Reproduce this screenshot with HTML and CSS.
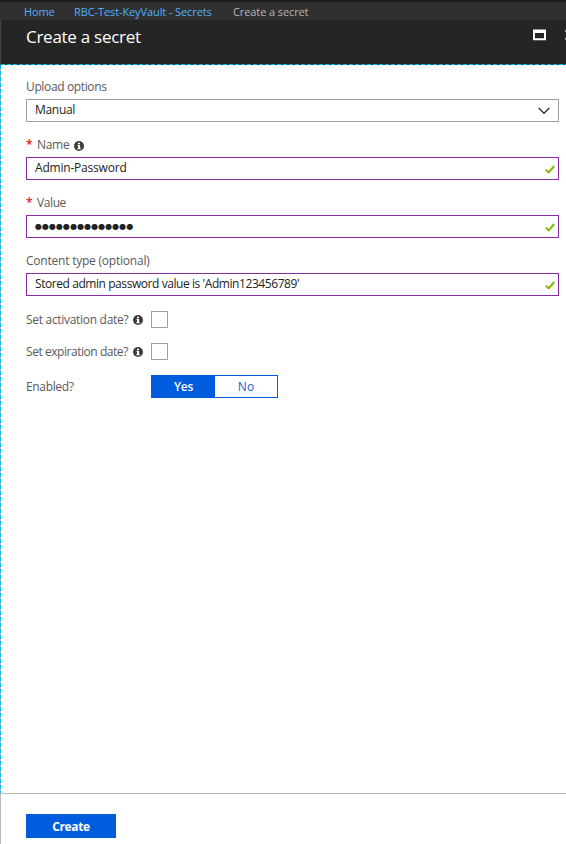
FILE: index.html
```html
<!DOCTYPE html>
<html lang="en">
<head>
<meta charset="utf-8">
<title>Create a secret</title>
<link rel="stylesheet" href="styles.css">
</head>
<body>
<svg class="defs" aria-hidden="true">
  <symbol id="info" viewBox="0 0 10 10"><circle cx="5" cy="5" r="5" fill="#3d3d3d"/><path d="M4 1.7h2v1.5H4zM3.5 4h2.6v3.3h.7v.9H3.3v-.9h.8V4.9h-.6z" fill="#fff"/></symbol>
  <symbol id="check" viewBox="0 0 10 9"><path d="M.8 4.6 3.7 7.4 9.2 1" fill="none" stroke="#7fba00" stroke-width="2"/></symbol>
</svg>
<nav class="crumbs">
  <a class="c1"><span>Home</span></a><a class="c2"><span>RBC-Test-KeyVault - Secrets</span></a><span class="here">Create a secret</span>
</nav>
<header class="head">
  <h1>Create a secret</h1>
  <div class="window">
    <svg width="13" height="12" viewBox="0 0 13 12"><path d="M0 .5h13v10.7H0zM2 4v5.3h9V4z" fill="#fff" fill-rule="evenodd"/></svg>
    <svg class="close" width="10" height="10" viewBox="0 0 10 10"><path d="M.5.5l9 9M9.500.5l-9 9" stroke="#fff" stroke-width="1.8"/></svg>
  </div>
</header>
<main class="form">
  <section class="field">
    <label class="t1">Upload options</label>
    <div class="box select"><span class="v1">Manual</span><svg width="12" height="8" viewBox="0 0 12 8"><path d="M.7 1 6 6.200 11.300 1" fill="none" stroke="#333" stroke-width="1.4"/></svg></div>
  </section>
  <section class="field">
    <label><b>*</b><span class="t2">Name</span><svg class="info"><use href="#info"/></svg></label>
    <div class="box"><span class="v2">Admin-Password</span><svg class="check"><use href="#check"/></svg></div>
  </section>
  <section class="field">
    <label><b>*</b><span class="t3">Value</span></label>
    <div class="box"><span class="dots">●●●●●●●●●●●●●●</span><svg class="check"><use href="#check"/></svg></div>
  </section>
  <section class="field">
    <label class="t4">Content type (optional)</label>
    <div class="box"><span class="v4">Stored admin password value is 'Admin123456789'</span><svg class="check"><use href="#check"/></svg></div>
  </section>
  <div class="row"><span class="t5">Set activation date?</span><svg class="info"><use href="#info"/></svg><i class="tick"></i></div>
  <div class="row"><span class="t6">Set expiration date?</span><svg class="info"><use href="#info"/></svg><i class="tick"></i></div>
  <div class="row last"><span class="t7">Enabled?</span><div class="toggle"><span class="on">Yes</span><span class="off">No</span></div></div>
</main>
<footer class="foot"><button>Create</button></footer>
</body>
</html>
```
FILE: styles.css
```css
* { box-sizing: border-box; }
body {
  margin: 0; width: 566px; height: 844px; overflow: hidden;
  display: flex; flex-direction: column; background: #fff;
  font: 12px/16px "Open Sans", "Noto Sans", sans-serif; color: #595959;
}
.defs { position: absolute; width: 0; height: 0; }
span, label { white-space: nowrap; }
.crumbs {
  height: 20px; flex: none; background: #303030; border-top: 2px solid #1c1c1c;
  padding: 2px 0 0 24px; display: flex; font-size: 11px; color: #b5b5b5; letter-spacing: -.1px;
}
.crumbs a { color: #4fb0ff; }
.c1 { width: 50px; }
.c2 { width: 159px; }
.head {
  height: 45px; flex: none; display: flex; justify-content: space-between;
  padding-left: 25px; border-left: 1px solid #444;
  background: repeating-linear-gradient(90deg, #00bcf2 0 4px, #252525 4px 6px) 0 100% / 100% 1px no-repeat #252525;
}
h1 { margin: 5px 0 0; font-size: 17px; line-height: 24px; font-weight: 400; color: #fff; letter-spacing: -.27px; }
.window { display: flex; margin: 9px -9px 0 0; gap: 19px; }
.close { margin-top: 1px; }
.form {
  flex: 1; padding: 14px 7px 0 26px;
  background: repeating-linear-gradient(180deg, #00bcf2 0 4px, #b9b9b9 4px 6px) 0 0 / 1px 100% no-repeat;
}
.field { height: 58px; }
label { display: flex; height: 16px; }
label b { width: 11px; color: #e81123; font-weight: 600; }
.info { width: 10px; height: 10px; flex: none; margin: 4px 0 0 5px; }
.t1 { letter-spacing: -.36px; }
.t2 { width: 32px; letter-spacing: -.3px; }
.t3 { letter-spacing: -.4px; }
.t4 { letter-spacing: -.22px; }
.t5 { width: 102px; letter-spacing: -.3px; }
.t6 { width: 102px; letter-spacing: -.45px; }
.t7 { letter-spacing: -.35px; }
.v1 { letter-spacing: -.3px; }
.v2 { letter-spacing: -.2px; }
.v4 { letter-spacing: -.43px; }
.box {
  margin-top: 4px; height: 23px; border: 1px solid #882aa5; padding: 0 3px 0 8px;
  display: flex; justify-content: space-between; align-items: center; color: #222;
}
.box span { line-height: 20px; height: 22px; }
.select { border-color: #a0a0a0; padding-right: 8px; }
.check { width: 10px; height: 9px; margin-top: 2px; }
.box .dots { font: 8px/21px "DejaVu Sans", sans-serif; letter-spacing: .05px; }
.row { height: 32px; display: flex; }
.row > span { line-height: 18px; }
.row .tick { width: 17px; height: 17px; border: 1px solid #a0a0a0; margin-left: 8px; }
.last > span { width: 125px; line-height: 24px; }
.toggle { display: flex; width: 127px; height: 23px; border: 1px solid #005cdc; line-height: 21px; text-align: center; }
.on { width: 63px; background: #005cdc; color: #fff; font-weight: 600; letter-spacing: -.3px; }
.off { flex: 1; color: #2458d8; }
.foot { height: 51px; flex: none; border-top: 1px solid #b9b9b9; border-left: 1px solid #b9b9b9; padding: 20px 0 0 25px; }
button {
  display: block; width: 90px; height: 24px; border: 0; padding: 1px 0 0; background: #005cdc; color: #fff;
  font: 700 12px/23px "Open Sans", sans-serif; letter-spacing: -.4px;
}
```
